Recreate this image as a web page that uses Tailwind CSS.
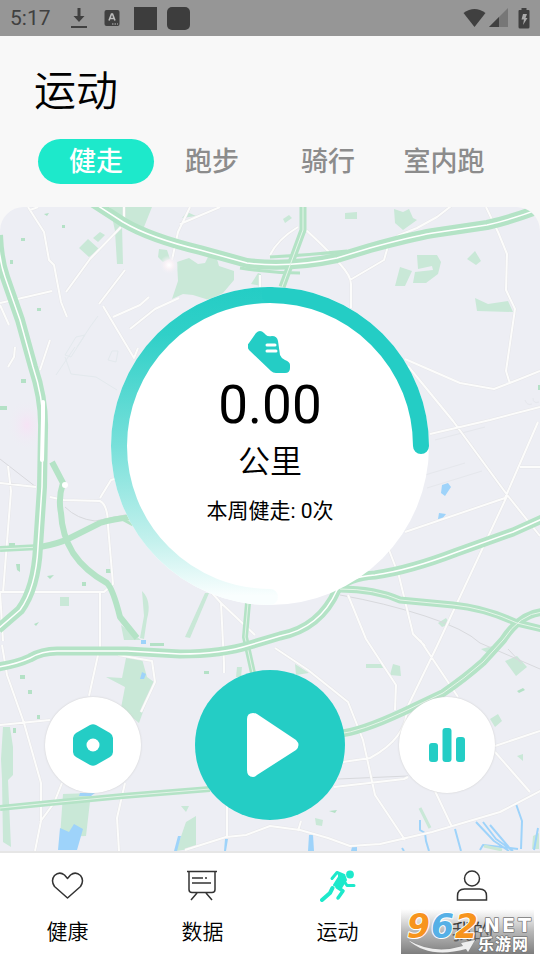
<!DOCTYPE html>
<html lang="zh-CN">
<head>
    <meta charset="UTF-8">
    <meta name="viewport" content="width=device-width, initial-scale=1.0">
    <title>运动</title>
    <script src="https://cdn.jsdelivr.net/npm/@tailwindcss/browser@4"></script>
</head>
<body class="flex min-h-screen flex-col bg-[#f8f8f8] font-[Roboto,'Noto_Sans_CJK_SC',sans-serif] text-black">

    <!-- Status bar -->
    <div class="flex h-9 items-center justify-between bg-[#969696] pr-[10px] pl-[10px] text-[#404040]">
        <div class="flex items-center">
            <span class="text-[21px] leading-9">5:17</span>
            <svg class="ml-5 h-[22px] w-4" viewBox="0 0 16 22" fill="currentColor"><path d="M6.500 1h3v8h4L8 15 2.500 9h4zM0 19h16v2H0z"/></svg>
            <svg class="ml-[17px] h-4 w-4" viewBox="0 0 16 16"><rect x=".5" width="15" height="16" rx="2" fill="currentColor"/><path d="M5 10.500L7.500 4h1l2.500 6.500M6 8.500h4" fill="none" stroke="#bbb" stroke-width="1.600"/><path d="M8 14h1.500M10.500 14H12M13 14h1" stroke="#bbb"/></svg>
            <span class="ml-[14px] h-[23px] w-[23px] bg-[#3d3d3d]"></span>
            <span class="ml-[10px] h-[23px] w-[23px] rounded-[5px] bg-[#3d3d3d]"></span>
        </div>
        <div class="flex items-center">
            <svg class="h-5 w-[23px]" viewBox="0 0 23 20"><path d="M.5 5Q11.500-3 22.500 5L11.500 19z" fill="#404040"/></svg>
            <svg class="ml-[3px] h-5 w-[19px]" viewBox="0 0 19 20"><path d="M0 19L19 0v19z" fill="#777"/><path d="M0 19L10 9v10z" fill="#404040"/></svg>
            <svg class="ml-[10px] h-[21px] w-3" viewBox="0 0 12 21"><path d="M3.500 0h5v2H10.500q1 0 1 1v16q0 1.500-1.500 1.500H2Q.5 20.500.5 19V3q0-1 1-1h2z" fill="#404040"/><path d="M5 6h4L7.500 10H9.500L5 17l1-5.500H3.500z" fill="#aaa"/></svg>
        </div>
    </div>

    <header>
        <h1 class="px-[34px] pt-6 text-[42px] leading-[64px] font-[350]">运动</h1>
        <div class="grid grid-cols-4 px-[38px] pt-[15px] pb-[23px] text-[27px] leading-[43px] font-medium text-[#8c8c8c]">
            <button class="rounded-full bg-[#1de9cb] pt-[2px] text-white">健走</button>
            <button class="rounded-full pt-[2px]">跑步</button>
            <button class="rounded-full pt-[2px]">骑行</button>
            <button class="rounded-full pt-[2px] whitespace-nowrap">室内跑</button>
        </div>
    </header>

    <main class="relative flex-1 overflow-hidden rounded-t-[24px] bg-[#edeef4]">
        <!-- Map -->
        <svg class="absolute inset-0 h-full w-full" viewBox="0 207 540 644" preserveAspectRatio="xMidYMid slice" fill="none" stroke-linejoin="round">
            <defs>
                <radialGradient id="blush"><stop offset="0" stop-color="#f6e3f5"/><stop offset="1" stop-color="#edeef4" stop-opacity="0"/></radialGradient>
                <radialGradient id="glow"><stop offset="0" stop-color="#fff"/><stop offset=".4" stop-color="#f9f2f6"/><stop offset="1" stop-color="#edeef4" stop-opacity="0"/></radialGradient>
            </defs>
            <!-- parks -->
            <g fill="#c9e8d7">
                <path d="M110 207h42l-10 25-20-7 1 39h-6l-2-33zM79 248l9-9 11 10-10 8zM93 238l7-6 5 3-7 7zM159 249l8 1 3 9-7 3-5-5z"/>
                <path d="M177 262l12-4 9 6 7-1 4-8 8 4 2 7 15 5v9l-11 13-14 7-16-5-10-1-11 5 6-18z"/>
                <path d="M182 218l5-6 9 4zM251 284l7-11 3 1v12zM283 219l6-4 3 3-7 5zM345 213l12-1v7h-12zM394 209l9 3 6-3 4 9 4 2-14 10-8-7z"/>
                <path d="M400 267l12 4-7 15-10 0zM417 255h20l4 7-3 12-12 9-13 0 2-11 18-2-1-4-14 3zM467 259l8-8 6 10-5 4zM475 298l13 6 20-3 5 11-36-1z"/>
                <path d="M60 597h9v9H60zM142 591q10 10 5 28l-3 20-4-1 4-22zM121 625l20 15-17 0zM205 593l4 0-19 45-5-1z"/>
                <path d="M126 658l16 1 5 18 7 5-6 16-9 25-18-15 4-21-19-10 16 1z"/>
                <path d="M3 727h7l3 20 0 28-5 5 3 67-8-5-1-63-1-20zM63 794l28-1-5 43-26 1z"/>
                <path d="M181 806l8 0-3 6zM186 822l10-6v32l-20 3zM237 667l5 0-1 10-5 0z"/>
                <path d="M366 664h18v4h-18zM393 664l7 2 1 10-11-1zM295 664l14 9-13 2zM505 661l12-5 10 11-11 9zM490 719l8-5 4 7-7 6zM517 756l6-2 0 7zM533 836l6-3 0 16-7 0zM438 623l8-5 4 6-8 3zM315 818l8 2-1 6-6-1zM481 649l12-3-4 8z"/>
            </g>
            <g fill="#b4e1c6">
                <path d="M62 225h3v3h-3zM44 214l5-1-2 3zM21 238h4v3h-4zM37 308h4v3h-4zM10 260h3v4h-3zM82 582h4v4h-4zM106 569h5v4h-5zM47 576l7-1-4 4zM16 564l4 0v8l-3-2zM9 543h6v3H9zM20 675h5v4h-5zM28 690h4v4h-4zM37 715h3v4h-3zM13 728h3v5h-3zM204 671h5v3h-5zM517 691l6-3 2 2-6 3zM34 624l5-2-3 4zM21 379h5v4h-5zM0 406h7v4H0zM329 811l8-1-2 3zM538 385h2v5h-2zM150 643h14v3h-14z"/>
            </g>
            <ellipse cx="27" cy="425" rx="20" ry="26" fill="url(#blush)"/>
            <path d="M65 355l11-18 9-2-14 22zM77 347l13-20 8-11M56 375l19-28M65 357l6 17 25 3 21 13M108 360l4-9 6 0-2 11z" stroke="#e3e9ed"/>
            <!-- water -->
            <g fill="#9ed3fa">
                <path d="M442 485l6-2 3 4-6 9-4-3zM439 513l7 1-4 5-4 0zM60 828l9 4 5-8 9 5-6 21H58zM142 672l4 2-2 5-4 0zM80 793l15 0-4 3-12 0zM178 836l3 0-4 15-3 0zM225 839l3 0-2 12-2 0zM309 835h4l1 16-6 0zM141 640h5v4h-5zM352 847h5v4h-6z"/>
            </g>
            <path d="M420 820v10l5 3 1 8 3 10M455 829l6 22M476 822l18 19 15 10M483 822l13 17 17 12M490 825l22 26M516 804l6 17-1 28M402 848l2 3M538 828l-4 22M480 850l3-5 35 4" stroke="#9ed3fa" stroke-width="2"/>
            <path d="M420 808l10 20M484 846l18 4" stroke="#c9e8d7" stroke-width="3"/>
            <!-- railways -->
            <path d="M0 459l36 28M65 507q12 12 30 14l35-7M340 595q45 8 85 21t55 27l60 26M338 779l70-3M508 649l14 15" stroke="#d8d9dd"/>
            <path d="M435 440l50-13M427 488l55-17M425 475l40-12M525 400q2 6 7 4M533 398q0 6 6 4" stroke="#e5e7ec"/>
            <!-- streets -->
            <g stroke="#e6e6e9" stroke-width="3">
                <path id="streetLines" d="M28 207l16 25 5 28 5 5 7 37 6 15M30 210l8-3M66 292l24-33 31-32M125 270l-26 34M103 306l31 52 4-10M113 317l27-12 9-8M130 329l25-20 24-11M0 303l52-12M0 305l9 20M50 340l-10 30M15 347l-1 10-6 10M124 207v15M190 207l-12 25-6 28M180 224l40-17M260 275v12M298 227q-20 12-28 28M306 230q20 18 34 34 11 12 11 20v24M350 280l34-20 4-14M397 236l20-8 20-11 18-14M486 207l12 25 9 22-1 36 9 19-9 62 4 13M405 359l55 24 34 6 26-10 20-8M408 366l45 55 55 75 32 40M430 434l60-14 50-13M0 483l36 4M8 466l3 25-8 102M50 497l14 3 36 1q8 4 8 25l5 58-9 8H0M100 498l11-18 15-4M0 591l3 50M100 591v60M0 725l50-5M2 645l5 30 17 48 17 60v38l-6 30M98 655l-9 41M62 783l-8 20-14 19M118 655l34 6 3 21-14 30M125 783l-8 35 2 33M212 593l9 10 3 60v10M221 603l34 32M275 648l33 22 40 32 15 38 12 55 30 45M227 805v32M185 850l41-13 20-2 24-9 30 4 28 8 22 8 30-2 52-12 68-20 42-22M348 595l18 44 30 46-1 25M389 550l10 26 14 58 12 12M405 532l100-34 33-76M520 467h20M507 496l-70 150-30 62q0 30-37 50l-27 4M420 640l38 57M495 746l45-15M495 752l35 40M435 791l17 36M334 787l70-8 4-2M301 821l-3 10"/>
            </g>
            <use href="#streetLines" stroke="#fcfcfb" stroke-width="2"/>
            <circle cx="169" cy="265" r="10" fill="url(#glow)"/>
            <!-- minor green roads -->
            <g stroke="#b4e3c6" stroke-width="6">
                <path d="M0 549l40-2q18-3 30-9l30-15q12-4 33-6M52 462l11 21q-5 15-2 30 1 22 12 40 12 18 34 30 6 6 13 34l17 21"/>
                <path d="M0 808l50-5 73-7 87-7M248 603l-3 34 8 36"/>
            </g>
            <path d="M270 257q40-2 77-6M240 268q30 5 60 5M120 518l13 7" stroke="#b4e3c6" stroke-width="3"/>
            <path d="M0 808l50-5 73-7 87-7M248 603l-3 34 8 36M0 549l40-2" stroke="#e2f3e8"/>
            <!-- motorways -->
            <g stroke="#b4e3c6" stroke-width="10">
                <path d="M92 202L123 222Q150 238 200 250L247 263Q290 268 337 258L370 248Q410 237 433 233L487 225Q510 220 542 208"/>
                <path d="M-2 235Q-1 260 5 277L20 320 33 367Q44 400 43 430L42 487 38 547Q36 588 20 610L-2 629"/>
                <path d="M-2 667Q17 664 30 658 42 651 57 651L127 651 180 654Q222 654 250 645L280 636Q320 628 337 590 346 577 375 575 410 570 457 552L513 532 542 519" stroke-width="9"/>
                <path d="M542 612Q520 614 503 640L483 662Q465 678 443 693L403 712Q360 732 338 734" stroke-width="8"/>
                <path d="M303 205V230L282 287M340 589Q375 589 400 600L453 605Q485 608 517 623L542 629" stroke-width="7"/>
            </g>
            <g stroke="#fff" stroke-width="1.500">
                <path d="M92 202L123 222Q150 238 200 250L247 263Q290 268 337 258L370 248Q410 237 433 233L487 225Q510 220 542 208"/>
                <path d="M-2 235Q-1 260 5 277L20 320 33 367Q44 400 43 430L42 487 38 547Q36 588 20 610L-2 629"/>
                <path d="M43 402v16l-1 42" stroke-width="4" stroke-linecap="round"/>
                <path d="M-2 667Q17 664 30 658 42 651 57 651L127 651 180 654Q222 654 250 645L280 636Q320 628 337 590 346 577 375 575 410 570 457 552L513 532 542 519"/>
                <path d="M542 612Q520 614 503 640L483 662Q465 678 443 693L403 712Q360 732 338 734M303 205V230L282 287M340 589Q375 589 400 600L453 605Q485 608 517 623L542 629" stroke="#e6f5ea" stroke-width="1"/>
            </g>
            <circle cx="65" cy="485" r="3" fill="#fff"/>
        </svg>

        <div class="relative flex flex-col items-center pt-20">
            <!-- Distance dial -->
            <div class="relative flex size-[318px] flex-col items-center rounded-full bg-white pt-11">
                <svg class="absolute inset-0 h-full w-full" viewBox="0 0 318 318" fill="none" stroke-width="16" stroke-linecap="round">
                    <defs>
                        <linearGradient id="fade" gradientUnits="userSpaceOnUse" x1="0" y1="0" x2="0" y2="318">
                            <stop offset="0" stop-color="#24cdc5"/>
                            <stop offset=".15" stop-color="#30d0c8"/>
                            <stop offset=".5" stop-color="#78e0da"/>
                            <stop offset=".8" stop-color="#c4f1ed"/>
                            <stop offset=".97" stop-color="#f9fefe"/>
                        </linearGradient>
                    </defs>
                    <path d="M159 310A151 151 0 0 1 159 8" stroke="url(#fade)"/>
                    <path d="M159 8A151 151 0 0 1 310 159" stroke="#24cdc5"/>
                </svg>
                <svg class="h-11 w-11" viewBox="0 0 44 44"><path d="M1 12L8 2Q12-2 16 2L18 4Q20 6 24 5Q29 5 30 10L32 24Q33 27 37 29Q42 31 42 34V37Q42 42 37 42H28Q25 42 23 40L1 19Q-2 15 1 12z" fill="#24cdc5"/><path d="M19 14h8M19 20h9" stroke="#fff" stroke-width="3" stroke-linecap="round"/></svg>
                <p class="text-[53px] leading-[60px]">0.00</p>
                <p class="pt-1 text-[32px] leading-[46px] font-[350]">公里</p>
                <p class="pt-[6px] text-[21px] leading-10">本周健走: 0次</p>
            </div>

            <div class="mt-[65px] flex w-full items-center justify-between px-[45px]">
                <button aria-label="设置" class="flex size-24 items-center justify-center rounded-full bg-white shadow-[0_0_2px_#ccc]">
                    <svg class="h-[42px] w-10" viewBox="0 0 40 42"><path d="M17 1q3-1.500 6 0l14 8q3 2 3 5v14q0 3-3 5l-14 8q-3 1.500-6 0L3 33q-3-2-3-5V14q0-3 3-5z" fill="#24cdc5"/><circle cx="20" cy="21" r="6.500" fill="#fff"/></svg>
                </button>
                <button aria-label="开始" class="flex size-[150px] items-center justify-center rounded-full bg-[#24cdc5]">
                    <svg class="ml-[6px] h-16 w-[52px]" viewBox="0 0 52 64"><path d="M0 6Q0 0 6 0Q8 0 10 1L49 27Q54 32 49 37L10 62Q8 64 6 64Q0 64 0 57z" fill="#fff"/></svg>
                </button>
                <button aria-label="统计" class="flex size-24 items-center justify-center rounded-full bg-white shadow-[0_0_2px_#ccc]">
                    <svg class="h-[34px] w-9" viewBox="0 0 36 34" fill="#24cdc5"><rect y="15" width="9" height="19" rx="3"/><rect x="13.500" width="9" height="34" rx="3"/><rect x="27" y="9" width="9" height="25" rx="3"/></svg>
                </button>
            </div>
        </div>
    </main>

    <nav class="relative grid h-[109px] grid-cols-4 border-t-2 border-[#e6e6e6] bg-white text-[21px] leading-8 font-[350]">
        <a href="#" class="flex flex-col items-center pt-[15px]">
            <svg class="h-[34px] w-[34px]" viewBox="0 0 34 34" fill="none" stroke="#333" stroke-width="1.500" stroke-linejoin="round"><path d="M16.500 30L3.500 18.500Q-.5 12.500 3.500 7.500Q8.500 3 13.500 7L16.500 10.500 19.500 7Q24.500 3 29.500 7.500Q33.500 12.500 29.500 18.500z"/></svg>
            <span class="mt-[14px]">健康</span>
        </a>
        <a href="#" class="flex flex-col items-center pt-[15px]">
            <svg class="h-[34px] w-[34px]" viewBox="0 0 34 34" fill="none" stroke="#333" stroke-width="1.500"><path d="M1 3.500h30M3 3.500v18q0 3 3 3h20q3 0 3-3v-18M6 10h11M19 10h2M6 15h19M11 25l-6 7M20 25l6 7"/></svg>
            <span class="mt-[14px]">数据</span>
        </a>
        <a href="#" aria-current="page" class="flex flex-col items-center pt-[15px]">
            <svg class="h-[34px] w-[36px]" viewBox="0 0 36 34" fill="none" stroke="#1de9cb" stroke-linecap="round" stroke-linejoin="round"><circle cx="30" cy="6.500" r="3.900" fill="#1de9cb" stroke="none"/><path d="M12 10.500l5-6 7 3" stroke-width="3"/><path d="M19 6l6 3 1 3-5 8-7-3 5-8z" fill="#1de9cb" stroke-width="2"/><path d="M24 13l3 4.500h7" stroke-width="3"/><path d="M17 19l6 4-5 7" stroke-width="3.500"/><path d="M12.500 20l-2.500 5-8 7" stroke-width="4"/></svg>
            <span class="mt-[14px]">运动</span>
        </a>
        <a href="#" class="flex flex-col items-center pt-[15px]">
            <svg class="h-[34px] w-[34px]" viewBox="0 0 34 34" fill="none" stroke="#333" stroke-width="1.500"><circle cx="16" cy="10.500" r="7.500"/><path d="M1.500 32v-4q0-7 7-7h15q7 0 7 7v4z"/></svg>
            <span class="mt-[14px]">我的</span>
        </a>

        <!-- Site stamp -->
        <svg class="absolute right-[6px] bottom-[6px] h-[45px] w-[133px] overflow-visible" viewBox="0 0 133 45" font-weight="700" paint-order="stroke" stroke-linejoin="round">
            <defs><linearGradient id="stamp" x2="0" y2="1"><stop offset="0" stop-color="#999" stop-opacity="0"/><stop offset=".5" stop-color="#888" stop-opacity=".6"/><stop offset="1" stop-color="#777" stop-opacity=".95"/></linearGradient></defs>
            <rect width="133" height="45" fill="url(#stamp)"/>
            <g font-size="33" font-style="italic" font-family="'DejaVu Sans',sans-serif" stroke="#fff" stroke-width="2">
                <text x="6" y="29" fill="#f7941d">9</text>
                <text x="30" y="29" fill="#56b0e6">6</text>
                <text x="54" y="29" fill="#f7941d">2</text>
            </g>
            <path d="M7 31Q32 46 62 37L60 34 74 31 67 43 65 40Q28 50 7 31z" fill="#eee" stroke="#888" stroke-width=".5"/>
            <g fill="#fff" stroke="#777" stroke-width="1.500">
                <text y="23" font-size="19" font-family="'DejaVu Sans',sans-serif"><tspan x="76">.</tspan><tspan x="83">N</tspan><tspan x="101">E</tspan><tspan x="117">T</tspan></text>
                <text y="41" font-size="16" font-family="'Noto Sans CJK SC',sans-serif"><tspan x="77">乐</tspan><tspan x="94">游</tspan><tspan x="111">网</tspan></text>
            </g>
        </svg>
    </nav>
</body>
</html>
